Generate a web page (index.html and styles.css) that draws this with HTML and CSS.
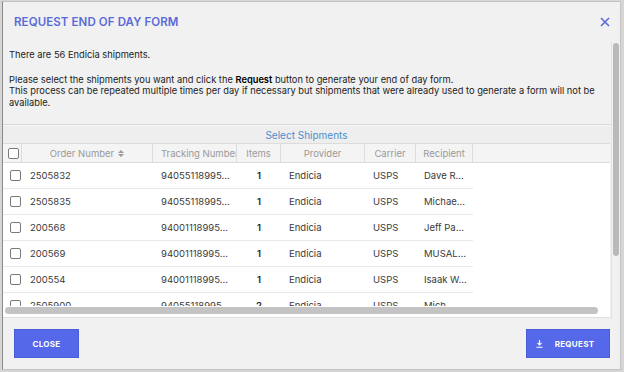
FILE: index.html
```html
<!DOCTYPE html>
<html lang="en">
<head>
  <meta charset="UTF-8">
  <title>Request End of Day Form</title>
  <link rel="stylesheet" href="styles.css">
</head>
<body>
  <div class="modal">
    <header class="modal-header">
      <h1>REQUEST END OF DAY FORM</h1>
      <svg class="close-x" width="10" height="10" viewBox="0 0 10 10">
        <path d="M1 1 L9 9 M9 1 L1 9" stroke="#5a6ad8" stroke-width="1.6" fill="none"/>
      </svg>
    </header>

    <div class="modal-body">
      <div class="body-main">
        <div class="intro">
          <p class="count">There are 56 Endicia shipments.</p>
          <p>Please select the shipments you want and click the <strong>Request</strong> button to generate your end of day form.<br>
          This process can be repeated multiple times per day if necessary but shipments that were already used to generate a form will not be available.</p>
        </div>

        <div class="grid">
          <div class="grid-title">Select Shipments</div>
          <div class="grid-head">
            <div class="cell cb-head"><span class="box"></span></div>
            <div class="cell">Order Number
              <svg class="sort" width="6" height="7" viewBox="0 0 6 7"><path d="M3 0 L6 3 L0 3 Z M0 4 L6 4 L3 7 Z" fill="#999"/></svg>
            </div>
            <div class="cell clip">Tracking Number</div>
            <div class="cell">Items</div>
            <div class="cell">Provider</div>
            <div class="cell">Carrier</div>
            <div class="cell">Recipient</div>
          </div>
          <div class="grid-rows">
            <div class="row">
              <div class="cell cb"><span class="box"></span></div>
              <div class="cell">2505832</div>
              <div class="cell">94055118995...</div>
              <div class="cell num">1</div>
              <div class="cell">Endicia</div>
              <div class="cell">USPS</div>
              <div class="cell">Dave R...</div>
            </div>
            <div class="row">
              <div class="cell cb"><span class="box"></span></div>
              <div class="cell">2505835</div>
              <div class="cell">94055118995...</div>
              <div class="cell num">1</div>
              <div class="cell">Endicia</div>
              <div class="cell">USPS</div>
              <div class="cell">Michae...</div>
            </div>
            <div class="row">
              <div class="cell cb"><span class="box"></span></div>
              <div class="cell">200568</div>
              <div class="cell">94001118995...</div>
              <div class="cell num">1</div>
              <div class="cell">Endicia</div>
              <div class="cell">USPS</div>
              <div class="cell">Jeff Pa...</div>
            </div>
            <div class="row">
              <div class="cell cb"><span class="box"></span></div>
              <div class="cell">200569</div>
              <div class="cell">94001118995...</div>
              <div class="cell num">1</div>
              <div class="cell">Endicia</div>
              <div class="cell">USPS</div>
              <div class="cell">MUSAL...</div>
            </div>
            <div class="row">
              <div class="cell cb"><span class="box"></span></div>
              <div class="cell">200554</div>
              <div class="cell">94001118995...</div>
              <div class="cell num">1</div>
              <div class="cell">Endicia</div>
              <div class="cell">USPS</div>
              <div class="cell">Isaak W...</div>
            </div>
            <div class="row">
              <div class="cell cb"><span class="box"></span></div>
              <div class="cell">2505900</div>
              <div class="cell">94055118995...</div>
              <div class="cell num">2</div>
              <div class="cell">Endicia</div>
              <div class="cell">USPS</div>
              <div class="cell">Mich...</div>
            </div>
          </div>
          <div class="hscroll"><div class="hthumb"></div></div>
        </div>
      </div>
      <div class="vscroll"><div class="vthumb"></div></div>
    </div>

    <footer class="modal-footer">
      <button class="btn">CLOSE</button>
      <button class="btn btn-request">
        <svg width="7" height="8" viewBox="0 0 7 8"><path d="M3.5 0 V5 M1.5 3 L3.5 5 L5.5 3 M0.5 7.3 H6.5" stroke="#fff" stroke-width="1.1" fill="none"/></svg>
        REQUEST
      </button>
    </footer>
  </div>
</body>
</html>
```

FILE: styles.css
```css
* {
  margin: 0;
  padding: 0;
  box-sizing: border-box;
}

body {
  font-family: 'Inter', 'Liberation Sans', sans-serif;
  background: #d6d6d6;
  width: 624px;
  height: 372px;
  overflow: hidden;
  color: #222;
}

.modal {
  margin: 1px 3px 0 2px;
  height: 369px;
  background: #f1f1f1;
  border: 1px solid #c4c4c4;
  border-left-color: #8a8a8a;
  display: flex;
  flex-direction: column;
}

.modal-header {
  height: 39px;
  display: flex;
  align-items: center;
  justify-content: space-between;
  padding: 0 10px 0 11px;
}

.modal-header h1 {
  font-size: 11.5px;
  font-weight: 600;
  color: #5a6ad8;
  letter-spacing: 0.1px;
}

.close-x {
  display: block;
}

.modal-body {
  height: 278px;
  display: flex;
}

.body-main {
  flex: 1;
  display: flex;
  flex-direction: column;
}

.intro {
  padding: 8px 6px 0 6px;
  font-size: 9.3px;
  line-height: 11.7px;
  color: #222;
  height: 84px;
  border-bottom: 1px solid #d9d9d9;
}

.intro .count {
  margin-bottom: 13px;
}

.intro strong {
  font-weight: 600;
  color: #000;
}

.grid {
  flex: 1;
  display: flex;
  flex-direction: column;
  margin-right: 1px;
}

.grid-title {
  height: 19px;
  line-height: 18px;
  text-align: center;
  font-size: 10px;
  color: #4d8fcc;
  background: #eeeeee;
  border-top: 1px solid #f8f8f8;
  border-bottom: 1px solid #dcdcdc;
}

.grid-head,
.row {
  display: grid;
  grid-template-columns: 19px 131px 84px 44px 84px 51px 57px;
}

.grid-head {
  height: 19px;
  background: #f4f4f4;
  border-bottom: 1px solid #dcdcdc;
  font-size: 9.5px;
  color: #999;
}

.grid-head .cell {
  display: flex;
  align-items: center;
  justify-content: center;
  gap: 4px;
  border-right: 1px solid #dcdcdc;
  white-space: nowrap;
  overflow: hidden;
}

.grid-head .clip {
  justify-content: flex-start;
  padding-left: 8px;
}

.grid-head .cb-head {
  justify-content: flex-start;
  padding-left: 5px;
}

.sort {
  display: block;
}

.grid-rows {
  height: 143px;
  overflow: hidden;
  background: #fff;
}

.row {
  width: 470px;
  height: 26px;
  border-bottom: 1px solid #e9e9e9;
  font-size: 9.5px;
  color: #3a3a3a;
}

.row .cell {
  display: flex;
  align-items: center;
  padding-left: 8px;
  white-space: nowrap;
}

.row .cb {
  padding-left: 7px;
}

.row .num {
  justify-content: center;
  padding-left: 0;
  font-weight: 600;
  color: #222;
}

.box {
  display: block;
  width: 11px;
  height: 11px;
  border: 1px solid #7a7a7a;
  border-radius: 2px;
  background: #fff;
  flex-shrink: 0;
}

.hscroll {
  height: 12px;
  background: #fff;
  padding: 1px 12px 4px 2px;
  border-bottom: 1px solid #dedede;
}

.hthumb {
  height: 7px;
  background: #c3c3c3;
  border-radius: 4px;
}

.vscroll {
  width: 9px;
  background: #f1f1f1;
  border-left: 1px solid #e2e2e2;
  padding: 2px 1px 0 1px;
}

.vthumb {
  height: 213px;
  background: #b9b9b9;
  border-radius: 3px;
}

.modal-footer {
  flex: 1;
  display: flex;
  justify-content: space-between;
  align-items: flex-start;
  padding: 10px 10px 0 11px;
}

.btn {
  height: 29px;
  width: 65px;
  background: #5468e9;
  border: 1px solid #4a5cd6;
  color: #fff;
  font-family: 'Inter', 'Liberation Sans', sans-serif;
  font-size: 8px;
  font-weight: 700;
  letter-spacing: 0.3px;
  display: flex;
  align-items: center;
  justify-content: center;
}

.btn-request {
  width: 84px;
  gap: 12px;
  padding-right: 6px;
}
```
